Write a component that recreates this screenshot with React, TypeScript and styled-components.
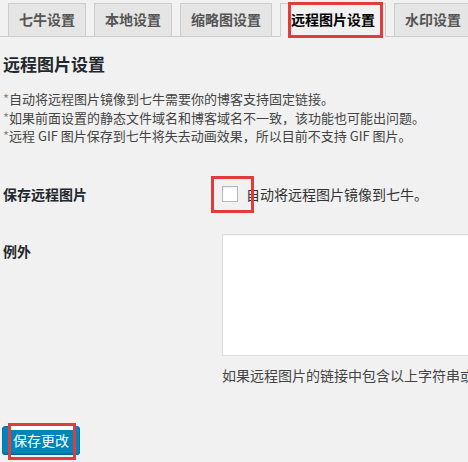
import React from 'react';
import styled, { createGlobalStyle } from 'styled-components';

// Global
const GlobalStyle = createGlobalStyle`
  html, body {
    margin: 0;
    padding: 0;
    background: #f1f1f1;
  }
  body {
    font-family: "Noto Sans CJK SC", "Liberation Sans", sans-serif;
    color: #23282d;
    overflow: hidden;
  }
`;

// Styles
const Page = styled.div`
  position: relative;
  width: 468px;
  height: 462px;
  overflow: hidden;
  padding-left: 3px;
  box-sizing: border-box;
`;

const TabBar = styled.div`
  display: flex;
  flex-wrap: nowrap;
  padding-top: 3px;
  margin-left: -3px;
  border-bottom: 1px solid #ccc;
  height: 33px;
  box-sizing: content-box;
`;

const Tab = styled.div<{ $active?: boolean }>`
  position: relative;
  flex: none;
  margin-left: 8px;
  margin-bottom: -1px;
  padding: 4px 10px 5px;
  border: 1px solid #ccc;
  border-bottom: ${(p) => (p.$active ? '1px solid #f1f1f1' : '1px solid #ccc')};
  background: ${(p) => (p.$active ? '#f1f1f1' : '#e5e5e5')};
  color: ${(p) => (p.$active ? '#000' : '#555')};
  font-size: 14px;
  font-weight: 700;
  line-height: 22px;
  white-space: nowrap;
`;

const Heading = styled.h2`
  margin: 16px 0 0;
  font-size: 17px;
  line-height: 22px;
  font-weight: 700;
  color: #23282d;
`;

const Notes = styled.div`
  margin-top: 15px;
  font-size: 13px;
  line-height: 18.5px;
  color: #444;
`;

const Star = styled.span`
  color: #888;
`;

const FormGrid = styled.div`
  display: grid;
  grid-template-columns: 219px 1fr;
  margin-top: 38px;
  row-gap: 30px;
`;

const RowLabel = styled.div<{ $top: number }>`
  padding-top: ${(p) => p.$top}px;
  font-size: 14px;
  font-weight: 700;
  line-height: 20px;
  color: #23282d;
`;

const CheckRow = styled.label`
  display: flex;
  align-items: center;
  gap: 8px;
  height: 20px;
  font-size: 14px;
  color: #333;
  white-space: nowrap;
`;

const Box = styled.span`
  width: 16px;
  height: 16px;
  box-sizing: border-box;
  border: 1px solid #b4b9be;
  background: #fff;
  box-shadow: inset 0 1px 2px rgba(0, 0, 0, 0.07);
`;

const Area = styled.div`
  width: 300px;
  height: 122px;
  box-sizing: border-box;
  border: 1px solid #ddd;
  background: #fff;
  box-shadow: inset 0 1px 2px rgba(0, 0, 0, 0.05);
`;

const Hint = styled.p`
  margin: 9px 0 0;
  font-size: 14px;
  line-height: 20px;
  color: #444;
  white-space: nowrap;
`;

const Submit = styled.button`
  display: block;
  margin: 41px 0 0 -1px;
  padding: 0 10px;
  height: 28px;
  border: 1px solid #0073aa;
  border-radius: 3px;
  background: #0085ba;
  box-shadow: 0 1px 0 #006799;
  color: #fff;
  font-family: "Noto Sans CJK SC", sans-serif;
  font-size: 14px;
  line-height: 26px;
`;

const Mark = styled.div`
  position: absolute;
  border: 3px solid #e23b3b;
  box-sizing: border-box;
  pointer-events: none;
`;

const TabMark = styled(Mark)`
  left: 288px;
  top: 2px;
  width: 95px;
  height: 36px;
`;

const CheckMark = styled(Mark)`
  left: 211px;
  top: 176px;
  width: 43px;
  height: 37px;
`;

const ButtonMark = styled(Mark)`
  left: 8px;
  top: 423px;
  width: 68px;
  height: 37px;
  &::before {
    content: '';
    position: absolute;
    left: 0;
    right: 0;
    top: 0;
    height: 4px;
    background: #fff;
  }
`;

const tabs = ['七牛设置', '本地设置', '缩略图设置', '远程图片设置', '水印设置'];

const notes = [
  '自动将远程图片镜像到七牛需要你的博客支持固定链接。',
  '如果前面设置的静态文件域名和博客域名不一致，该功能也可能出问题。',
  '远程 GIF 图片保存到七牛将失去动画效果，所以目前不支持 GIF 图片。',
];

const App = () => {
  return (
    <Page>
      <GlobalStyle />
      <TabBar>
        {tabs.map((t, i) => (
          <Tab key={t} $active={i === 3}>
            {t}
          </Tab>
        ))}
      </TabBar>

      <Heading>远程图片设置</Heading>

      <Notes>
        {notes.map((n) => (
          <div key={n}>
            <Star>*</Star>
            {n}
          </div>
        ))}
      </Notes>

      <FormGrid>
        <RowLabel $top={0}>保存远程图片</RowLabel>
        <div>
          <CheckRow>
            <Box />
            自动将远程图片镜像到七牛。
          </CheckRow>
        </div>

        <RowLabel $top={7}>例外</RowLabel>
        <div>
          <Area />
          <Hint>如果远程图片的链接中包含以上字符串或者域名，就不会被保存并镜像到七牛。</Hint>
        </div>
      </FormGrid>

      <Submit>保存更改</Submit>

      <TabMark />
      <CheckMark />
      <ButtonMark />
    </Page>
  );
};

export default App;
